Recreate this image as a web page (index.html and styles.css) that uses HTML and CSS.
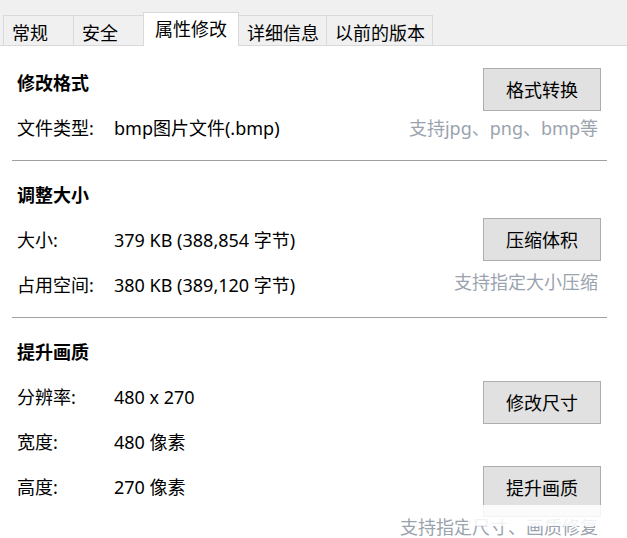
FILE: index.html
```html
<!DOCTYPE html>
<html lang="zh-CN">
<head>
<meta charset="utf-8">
<title>属性修改</title>
<link rel="stylesheet" href="styles.css">
</head>
<body>
<div class="window">
  <div class="tabbar">
    <div class="tab">常规</div>
    <div class="tab">安全</div>
    <div class="tab active">属性修改</div>
    <div class="tab">详细信息</div>
    <div class="tab">以前的版本</div>
  </div>
  <div class="page">
    <section class="group group-first">
      <div class="row">
        <span class="title">修改格式</span>
        <button class="btn btn-low">格式转换</button>
      </div>
      <div class="row">
        <span class="label">文件类型:</span>
        <span class="value">bmp图片文件(.bmp)</span>
        <span class="hint">支持jpg、png、bmp等</span>
      </div>
    </section>
    <hr class="divider">
    <section class="group">
      <div class="row">
        <span class="title">调整大小</span>
      </div>
      <div class="row">
        <span class="label">大小:</span>
        <span class="value">379 KB (388,854 字节)</span>
        <button class="btn">压缩体积</button>
      </div>
      <div class="row">
        <span class="label">占用空间:</span>
        <span class="value">380 KB (389,120 字节)</span>
        <span class="hint hint-up">支持指定大小压缩</span>
      </div>
    </section>
    <hr class="divider">
    <section class="group group-last">
      <div class="row">
        <span class="title">提升画质</span>
      </div>
      <div class="row">
        <span class="label">分辨率:</span>
        <span class="value">480 x 270</span>
        <button class="btn btn-mid">修改尺寸</button>
      </div>
      <div class="row">
        <span class="label">宽度:</span>
        <span class="value">480 像素</span>
      </div>
      <div class="row">
        <span class="label">高度:</span>
        <span class="value">270 像素</span>
        <button class="btn btn-tall">提升画质</button>
      </div>
      <div class="row row-hint">
        <span class="hint">支持指定尺寸、画质修复</span>
      </div>
    </section>
  </div>
  <div class="fade"></div>
</div>
</body>
</html>
```
FILE: styles.css
```css
* { box-sizing: border-box; }

html, body {
  margin: 0;
  padding: 0;
  background: #ffffff;
}

body {
  font-family: "Noto Sans", "Noto Sans CJK SC", sans-serif;
  font-size: 18px;
  color: #000;
  overflow: hidden;
}

.window {
  position: relative;
  width: 627px;
  height: 538px;
  overflow: hidden;
}

.tabbar {
  display: flex;
  align-items: flex-end;
  height: 46px;
  padding-left: 3px;
  background: #f0f0f0;
  border-bottom: 1px solid #d9d9d9;
}

.tab {
  height: 30px;
  min-width: 70px;
  padding: 4px 7px 0 8px;
  line-height: 26px;
  border-top: 1px solid #d9d9d9;
  border-left: 1px solid #d9d9d9;
  background: #f0f0f0;
  white-space: nowrap;
}

.tab:last-child {
  border-right: 1px solid #d9d9d9;
}

.tab.active {
  height: 34px;
  margin-bottom: -1px;
  padding: 3px 11px 0 11px;
  background: #ffffff;
  border-right: 1px solid #d9d9d9;
  position: relative;
  z-index: 1;
}

.active + .tab {
  border-left: none;
}

.page {
  padding: 0 26px 0 17px;
}

.group {
  padding: 11px 0 10px;
}

.group-first {
  padding-top: 14px;
}

.group-last {
  padding-bottom: 0;
}

.row {
  display: grid;
  grid-template-columns: 97px 1fr auto;
  grid-template-rows: 45px;
  align-items: center;
  height: 45px;
  line-height: 24px;
}

.row-hint {
  grid-template-rows: 36px;
  height: 36px;
}

.title {
  grid-column: 1 / 3;
  font-weight: 700;
}

.label {
  grid-column: 1;
}

.value {
  grid-column: 2;
  white-space: nowrap;
}

.hint {
  grid-column: 3;
  color: #9aa3ae;
  margin-right: 3px;
  white-space: nowrap;
}

.hint-up {
  margin-bottom: 5px;
}

.btn {
  grid-column: 3;
  width: 118px;
  height: 43px;
  padding: 0;
  font: inherit;
  color: #000;
  background: #e1e1e1;
  border: 1px solid #adadad;
  border-radius: 0;
}

.btn-low {
  align-self: start;
  margin-top: 8px;
}

.btn-mid {
  align-self: start;
  margin-top: 7px;
}

.btn-tall {
  align-self: start;
  margin-top: 2px;
  height: 51px;
  padding-bottom: 8px;
}

.divider {
  margin: 0 -6px 0 -5px;
  border: none;
  border-top: 1px solid #a0a0a0;
  height: 0;
}

.fade {
  position: absolute;
  left: 468px;
  top: 505px;
  width: 142px;
  height: 21px;
  background: rgba(255, 255, 255, 0.85);
}
```
